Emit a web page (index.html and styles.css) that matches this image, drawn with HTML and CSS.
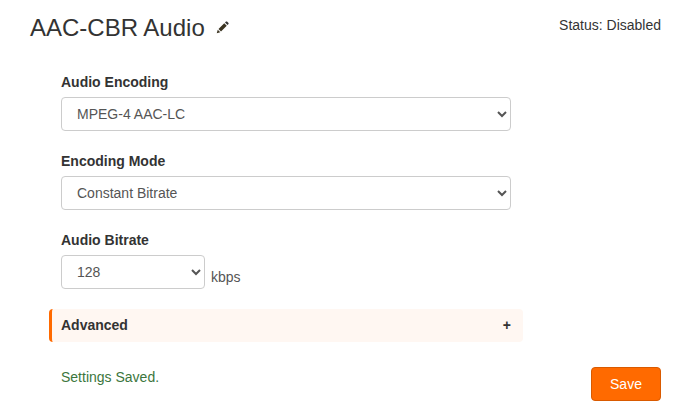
FILE: index.html
```html
<!DOCTYPE html>
<html lang="en">
<head>
<meta charset="utf-8">
<title>AAC-CBR Audio</title>
<link rel="stylesheet" href="styles.css">
</head>
<body>
<div class="page">
  <header class="head">
    <h1 class="title">AAC-CBR Audio<svg class="pencil" width="13" height="13" viewBox="0 0 26 26" aria-hidden="true"><path fill="#3a3320" d="M1.500 24.500 L3.500 17.500 L8.500 22.500 Z"/><path fill="#3a3320" d="M5 16 L16.500 4.500 L21.500 9.500 L10 21 Z"/><path fill="#333" d="M18 3 L20 1 Q21 0.500 22 1 L25 4 Q25.500 5 25 6 L23 8 Z"/></svg></h1>
    <div class="status">Status: Disabled</div>
  </header>
  <form class="form">
    <div class="field">
      <label class="label" for="enc">Audio Encoding</label>
      <select class="select" id="enc"><option>MPEG-4 AAC-LC</option></select>
    </div>
    <div class="field">
      <label class="label" for="mode">Encoding Mode</label>
      <select class="select" id="mode"><option>Constant Bitrate</option></select>
    </div>
    <div class="field">
      <label class="label" for="rate">Audio Bitrate</label>
      <div class="inline">
        <select class="select small" id="rate"><option>128</option></select>
        <span class="unit">kbps</span>
      </div>
    </div>
    <div class="accordion"><span>Advanced</span><span class="plus">+</span></div>
  </form>
  <footer class="foot">
    <span class="saved">Settings Saved.</span>
    <button class="save" type="button">Save</button>
  </footer>
</div>
</body>
</html>
```
FILE: styles.css
```css
* { box-sizing: border-box; }
html, body { margin: 0; padding: 0; background: #fff; }
body { font-family: "Liberation Sans", Arial, sans-serif; font-size: 14px; color: #333; }
.page { width: 680px; height: 414px; padding: 14px 19px 0 30px; overflow: hidden; }
.head { display: flex; justify-content: space-between; align-items: flex-start; height: 58px; }
.title { margin: 0; font-size: 24px; font-weight: 400; line-height: 27px; }
.pencil { margin-left: 11px; vertical-align: 2px; }
.status { margin-top: 1px; line-height: 20px; }
.form { padding-left: 19px; width: 493px; }
.field { margin-bottom: 20px; padding-left: 12px; }
.label { display: block; font-weight: 700; line-height: 20px; margin-bottom: 5px; color: #333; }
.select { display: block; width: 450px; height: 34px; padding: 6px 12px 6px 11px; font: 14px "Liberation Sans", Arial, sans-serif; color: #555; background: #fff; border: 1px solid #ccc; border-radius: 4px; }
.select.small { width: 144px; }
.inline { display: flex; align-items: flex-end; gap: 6px; }
.unit { line-height: 20px; margin-bottom: 2px; color: #555; }
.accordion { display: flex; justify-content: space-between; align-items: center; height: 33px; padding: 0 12px 2px 9px; background: #fff7f2; border-left: 3px solid #ff6a00; border-radius: 4px; font-weight: 700; color: #333; }
.plus { font-size: 14px; }
.foot { display: flex; justify-content: space-between; align-items: flex-start; margin-top: 25px; padding-left: 31px; }
.saved { color: #3c763d; line-height: 20px; }
.save { width: 70px; height: 34px; font: 14px "Liberation Sans", Arial, sans-serif; color: #fff; background: #ff6a00; border: 1px solid #d95a00; border-radius: 4px; padding: 0; }
```
